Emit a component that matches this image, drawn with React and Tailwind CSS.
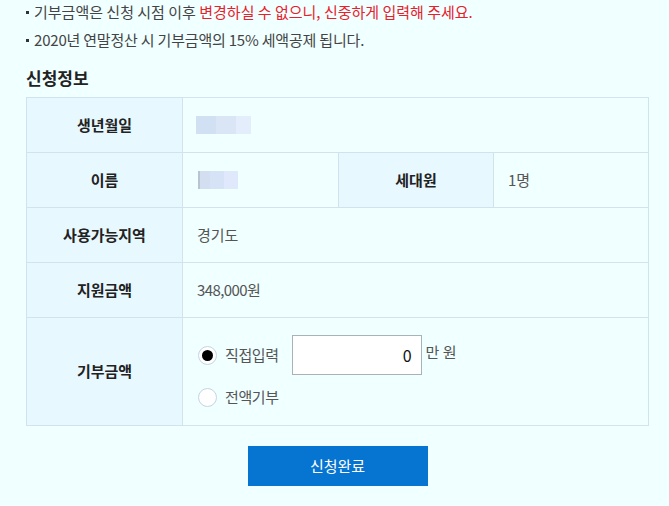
const font = { fontFamily: '"Noto Sans CJK KR", "Noto Sans", sans-serif' };

const Label = ({ children, className = '' }) => (
    <div className={`flex items-center justify-center bg-[#e8f8ff] border-r border-[#d3e2ef] text-[15px] font-bold text-[#222] ${className}`}>
        {children}
    </div>
);

const Blur = ({ cells }) => (
    <div className="flex h-[18px]">
        {cells.map((c, i) => (
            <div key={i} className={`h-full ${c}`}></div>
        ))}
    </div>
);

const Radio = ({ checked }) => (
    <span className="w-[19px] h-[19px] rounded-full border border-[#c4d3e6] bg-white flex items-center justify-center">
        {checked && <span className="w-[11px] h-[11px] rounded-full bg-black"></span>}
    </span>
);

export default function App() {
    return (
        <div className="w-[669px] h-[506px] bg-[#f0ffff] pl-[26px] overflow-hidden" style={font}>
            {/* Notices */}
            <div className="flex flex-col gap-[4px] text-[15px] text-[#444]">
                <p className="flex items-center h-[24px] leading-[24px]">
                    <span className="w-[3px] h-[3px] bg-[#333] mr-[5px]"></span>
                    기부금액은 신청 시점 이후&nbsp;<span className="text-[#e8202a]">변경하실 수 없으니, 신중하게 입력해 주세요.</span>
                </p>
                <p className="flex items-center h-[24px] leading-[24px] tracking-[-0.2px]">
                    <span className="w-[3px] h-[3px] bg-[#333] mr-[5px]"></span>
                    2020년 연말정산 시 기부금액의 15% 세액공제 됩니다.
                </p>
            </div>

            <h3 className="mt-[14px] h-[24px] leading-[24px] text-[17px] font-bold text-[#222]">신청정보</h3>

            {/* Table */}
            <div className="mt-[7px] w-[623px] border border-[#d3e2ef]">
                <div className="flex h-[55px] border-b border-[#d3e2ef]">
                    <Label className="w-[156px]">생년월일</Label>
                    <div className="flex-1 flex items-center pl-[13px]">
                        <Blur cells={['w-[20px] bg-[#d2e0f3]', 'w-[20px] bg-[#dae6f6]', 'w-[15px] bg-[#e3edfb]']} />
                    </div>
                </div>
                <div className="flex h-[55px] border-b border-[#d3e2ef]">
                    <Label className="w-[156px]">이름</Label>
                    <div className="w-[156px] flex items-center pl-[15px] border-r border-[#d3e2ef]">
                        <Blur cells={['w-[2px] bg-[#b8c4d2]', 'w-[10px] bg-[#d3dff1]', 'w-[14px] bg-[#d6e3f6]', 'w-[14px] bg-[#dfe9fb]']} />
                    </div>
                    <Label className="w-[155px]">세대원</Label>
                    <div className="flex-1 flex items-center pl-[14px] text-[15px] text-[#555]">1명</div>
                </div>
                <div className="flex h-[55px] border-b border-[#d3e2ef]">
                    <Label className="w-[156px]">사용가능지역</Label>
                    <div className="flex-1 flex items-center pl-[14px] text-[15px] text-[#555]">경기도</div>
                </div>
                <div className="flex h-[55px] border-b border-[#d3e2ef]">
                    <Label className="w-[156px]">지원금액</Label>
                    <div className="flex-1 flex items-center pl-[14px] text-[15px] text-[#555] tracking-[-0.6px]">348,000원</div>
                </div>
                <div className="flex h-[107px]">
                    <Label className="w-[156px]">기부금액</Label>
                    <div className="flex-1 flex flex-col pl-[15px] pt-[17px] text-[15px] text-[#555]">
                        <div className="flex items-center h-[40px]">
                            <Radio checked />
                            <span className="ml-[8px] mr-[13px] tracking-[-0.4px]">직접입력</span>
                            <div className="w-[130px] h-[40px] border border-[#a9b1ba] bg-white flex items-center justify-end pr-[9px] text-[16px] text-[#111]">0</div>
                            <span className="ml-[4px] -mt-[6px]">만 원</span>
                        </div>
                        <div className="flex items-center h-[24px] mt-[10px]">
                            <Radio />
                            <span className="ml-[8px] tracking-[-0.4px]">전액기부</span>
                        </div>
                    </div>
                </div>
            </div>

            <div className="w-[623px] flex justify-center mt-[20px]">
                <button className="w-[180px] h-[40px] bg-[#0674d1] text-white text-[15px]">신청완료</button>
            </div>
        </div>
    );
}
